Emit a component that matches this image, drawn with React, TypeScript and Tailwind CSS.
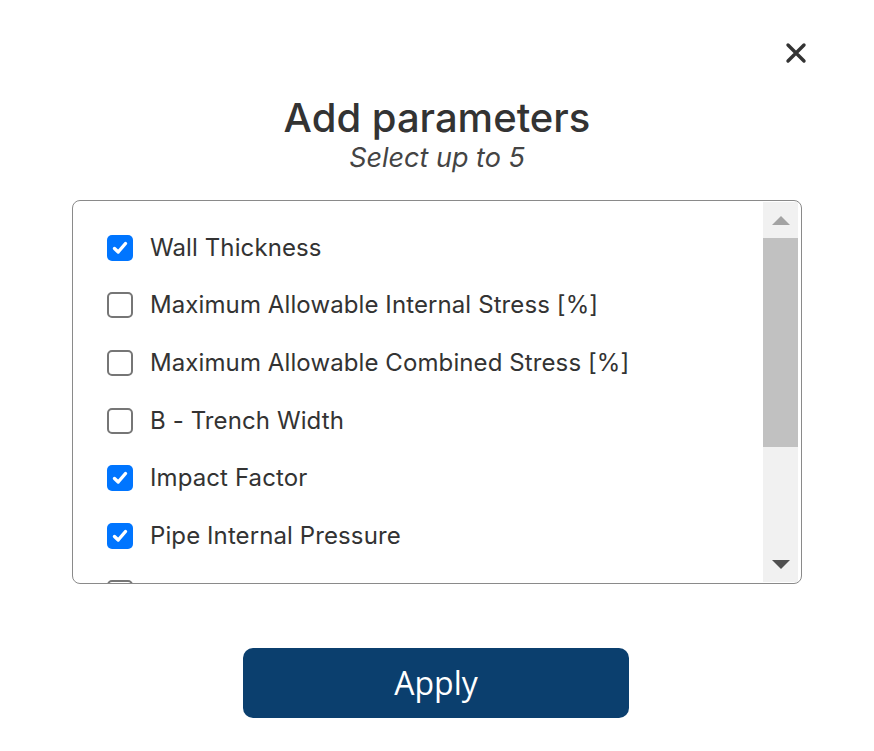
import { useState } from 'react'

const PARAMS = [
  'Wall Thickness',
  'Maximum Allowable Internal Stress [%]',
  'Maximum Allowable Combined Stress [%]',
  'B - Trench Width',
  'Impact Factor',
  'Pipe Internal Pressure',
  'Soil Modulus of Reaction',
  'Deflection Lag Factor',
]

function Checkbox({ checked }: { checked: boolean }) {
  return checked ? (
    <span className="w-[26px] h-[26px] shrink-0 rounded-[5px] bg-[#0075ff] flex items-center justify-center">
      <svg width="18" height="18" viewBox="0 0 18 18" fill="none">
        <path d="M3.5 9.5 L7.2 13 L14.5 4.5" stroke="white" strokeWidth="3.4" strokeLinecap="round" strokeLinejoin="round" />
      </svg>
    </span>
  ) : (
    <span className="w-[26px] h-[26px] shrink-0 rounded-[5px] border-2 border-[#767676] bg-white" />
  )
}

export default function App() {
  const [selected, setSelected] = useState<string[]>(['Wall Thickness', 'Impact Factor', 'Pipe Internal Pressure'])

  const toggle = (name: string) => {
    setSelected((prev) =>
      prev.includes(name) ? prev.filter((p) => p !== name) : prev.length < 5 ? [...prev, name] : prev
    )
  }

  return (
    <div className="w-full h-[751px] bg-white pt-[42px] font-['Inter','Noto_Sans',sans-serif] text-[#333333]">
      <div className="flex justify-end pr-[67px] h-[22px]">
        <button className="w-[22px] h-[22px] flex items-center justify-center">
          <svg width="22" height="22" viewBox="0 0 22 22">
            <path d="M3 3 L19 19 M19 3 L3 19" stroke="#333333" strokeWidth="3.4" strokeLinecap="round" />
          </svg>
        </button>
      </div>

      <h1 className="mt-[30px] text-center text-[40px] leading-[48px] font-medium">Add parameters</h1>
      <p className="text-center text-[27px] leading-[32px] italic text-[#444444]">Select up to 5</p>

      <div className="mt-[26px] mx-auto w-[730px] h-[384px] border border-[#8a8a8a] rounded-[8px] flex overflow-hidden">
        <div className="flex-1 overflow-hidden pl-[34px] pt-[18px]">
          {PARAMS.map((p) => (
            <label key={p} onClick={() => toggle(p)} className="h-[57.6px] flex items-center gap-[17px] cursor-pointer">
              <Checkbox checked={selected.includes(p)} />
              <span className="text-[24px] leading-[28px] tracking-[0.1px] text-[#333333] whitespace-nowrap">{p}</span>
            </label>
          ))}
        </div>
        <div className="w-[35px] my-[1px] mr-[3px] bg-[#f1f1f1] flex flex-col">
          <div className="h-[36px] flex items-center justify-center">
            <svg width="18" height="9" viewBox="0 0 18 9">
              <path d="M0 9 L9 0 L18 9 Z" fill="#a3a3a3" />
            </svg>
          </div>
          <div className="h-[209px] bg-[#c1c1c1]" />
          <div className="flex-1" />
          <div className="h-[36px] flex items-center justify-center">
            <svg width="18" height="9" viewBox="0 0 18 9">
              <path d="M0 0 L18 0 L9 9 Z" fill="#505050" />
            </svg>
          </div>
        </div>
      </div>

      <div className="mt-[64px] flex justify-center pr-[2px]">
        <button className="w-[386px] h-[70px] rounded-[10px] bg-[#0b3f6e] text-white text-[32px] leading-[40px] font-['Open_Sans',sans-serif]">
          Apply
        </button>
      </div>
    </div>
  )
}
